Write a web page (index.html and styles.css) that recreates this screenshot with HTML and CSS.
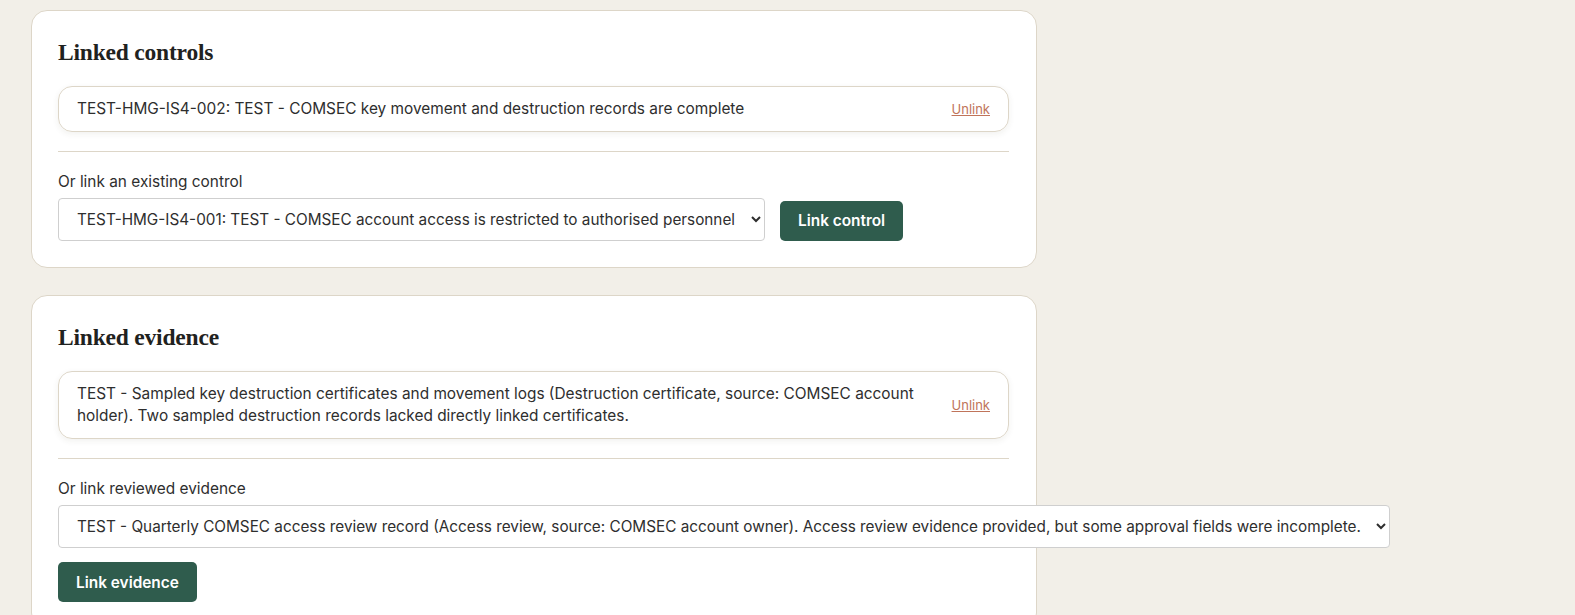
FILE: index.html
```html
<!DOCTYPE html>
<html lang="en">
<head>
<meta charset="utf-8">
<title>Linked controls and evidence</title>
<link rel="stylesheet" href="styles.css">
</head>
<body>
<main class="page">
  <section class="card">
    <h2 class="card-title">Linked controls</h2>
    <ul class="linked-list">
      <li class="linked-item">
        <span class="linked-text">TEST-HMG-IS4-002: TEST - COMSEC key movement and destruction records are complete</span>
        <a href="#" class="unlink">Unlink</a>
      </li>
    </ul>
    <hr class="divider">
    <label class="field-label" for="ctl">Or link an existing control</label>
    <div class="inline-form">
      <select id="ctl" class="select">
        <option>TEST-HMG-IS4-001: TEST - COMSEC account access is restricted to authorised personnel</option>
      </select>
      <button class="btn" type="button">Link control</button>
    </div>
  </section>

  <section class="card">
    <h2 class="card-title">Linked evidence</h2>
    <ul class="linked-list">
      <li class="linked-item">
        <span class="linked-text">TEST - Sampled key destruction certificates and movement logs (Destruction certificate, source: COMSEC account holder). Two sampled destruction records lacked directly linked certificates.</span>
        <a href="#" class="unlink">Unlink</a>
      </li>
    </ul>
    <hr class="divider">
    <label class="field-label" for="ev">Or link reviewed evidence</label>
    <div class="stack-form">
      <select id="ev" class="select">
        <option>TEST - Quarterly COMSEC access review record (Access review, source: COMSEC account owner). Access review evidence provided, but some approval fields were incomplete.</option>
      </select>
      <button class="btn" type="button">Link evidence</button>
    </div>
  </section>
</main>
</body>
</html>
```

FILE: styles.css
```css
* { box-sizing: border-box; }

html, body {
  margin: 0;
  padding: 0;
  background: #f2efe8;
}

body {
  font-family: "Inter", "Noto Sans", sans-serif;
  font-size: 15.4px;
  color: #2e2e2e;
}

.page {
  padding: 10px 0 0 31px;
  display: flex;
  flex-direction: column;
  gap: 27px;
}

.card {
  width: 1006px;
  background: #ffffff;
  border: 1px solid #ddd6c8;
  border-radius: 16px;
  padding: 26px 27px 26px 26px;
  display: flex;
  flex-direction: column;
}

.card-title {
  margin: 0 0 19px 0;
  font-family: "Liberation Serif", "DejaVu Serif", serif;
  font-weight: 700;
  font-size: 23.5px;
  line-height: 30px;
  color: #1f2220;
  letter-spacing: -0.2px;
}

.linked-list {
  list-style: none;
  margin: 0;
  padding: 0;
}

.linked-item {
  display: flex;
  align-items: center;
  gap: 20px;
  border: 1px solid #ddd6c8;
  border-radius: 14px;
  padding: 11px 18px;
  min-height: 46px;
  box-shadow: 0 2px 6px rgba(60, 50, 30, 0.07);
  line-height: 22px;
}

.linked-text {
  flex: 1;
}

.unlink {
  color: #c0745a;
  font-size: 13px;
  text-decoration: underline;
  white-space: nowrap;
}

.divider {
  border: 0;
  border-top: 1px solid #ddd6c8;
  margin: 19px 0 20px 0;
}

.field-label {
  display: block;
  margin-bottom: 6px;
  line-height: 20px;
}

.inline-form {
  display: flex;
  align-items: center;
  gap: 15px;
}

.stack-form {
  display: flex;
  flex-direction: column;
  align-items: flex-start;
  gap: 14px;
}

.select {
  font-family: inherit;
  font-size: 15.3px;
  color: #2e2e2e;
  height: 43px;
  padding: 0 12px 0 14px;
  border: 1px solid #cfcfcf;
  border-radius: 4px;
  background: #ffffff;
  flex: none;
}

.inline-form .btn {
  margin-top: 2px;
}

.btn {
  font-family: inherit;
  font-size: 15.4px;
  font-weight: 600;
  color: #ffffff;
  background: #2f5c4d;
  border: 0;
  border-radius: 5px;
  height: 40px;
  padding: 0 18px;
  cursor: pointer;
}
```
